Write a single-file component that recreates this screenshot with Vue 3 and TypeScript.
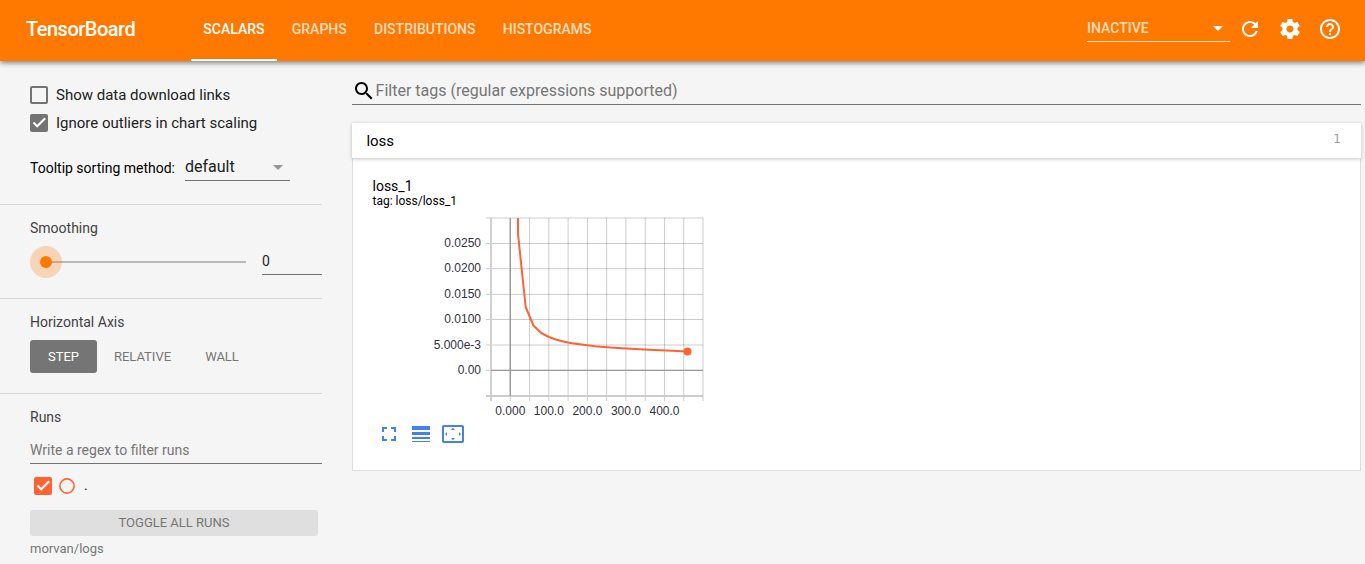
<script setup lang="ts">
import { ref } from 'vue'

const tabs: string[] = ['SCALARS', 'GRAPHS', 'DISTRIBUTIONS', 'HISTOGRAMS']
const activeTab = ref('SCALARS')
const axes: string[] = ['STEP', 'RELATIVE', 'WALL']
const axis = ref('STEP')

// Plot geometry, relative to the chart's own origin.
const left = 119
const right = 331
const top = 8
const bottom = 186
const columns: number[] = Array.from({ length: 10 }, (_, i) => 138.3 + i * 19.27)
const rows = [
  { y: 33.5, label: '0.0250' },
  { y: 58.7, label: '0.0200' },
  { y: 84.4, label: '0.0150' },
  { y: 109.5, label: '0.0100' },
  { y: 135, label: '5.000e-3' },
  { y: 160.4, label: '0.00' },
]
const ticks = [
  { x: 138.3, label: '0.000' },
  { x: 176.8, label: '100.0' },
  { x: 215.4, label: '200.0' },
  { x: 253.9, label: '300.0' },
  { x: 292.5, label: '400.0' },
]
const curve =
  'M146 8V24L153.7 97L161.4 115.5L169.2 123L176.9 127L184.6 129.8L192.3 131.7L200 133.2L207.7 134.3L215.4 135.3L223 136.2L238.5 137.6L254 138.6L277 139.7L300 140.7L315.5 141.4'
</script>

<template>
  <div class="page">
    <header class="toolbar">
      <div class="brand">TensorBoard</div>
      <nav class="tabs">
        <div v-for="t in tabs" :key="t" class="tab" :class="{ active: t === activeTab }" @click="activeTab = t">{{ t }}</div>
      </nav>
      <div class="status">
        <span>INACTIVE</span>
        <svg width="24" height="24" viewBox="0 0 24 24"><path fill="#fff" d="M7 10l5 5 5-5z" /></svg>
      </div>
      <div class="actions">
        <svg width="24" height="24" viewBox="0 0 24 24"><path fill="#fff" d="M17.65 6.35C16.2 4.9 14.21 4 12 4c-4.42 0-7.99 3.58-7.99 8s3.57 8 7.99 8c3.73 0 6.84-2.55 7.73-6h-2.08c-.82 2.33-3.04 4-5.65 4-3.31 0-6-2.69-6-6s2.69-6 6-6c1.66 0 3.14.69 4.22 1.78L13 11h7V4l-2.35 2.35z" /></svg>
        <svg width="24" height="24" viewBox="0 0 24 24"><path fill="#fff" d="M19.43 12.98c.04-.32.07-.64.07-.98s-.03-.66-.07-.98l2.11-1.65c.19-.15.24-.42.12-.64l-2-3.46c-.12-.22-.39-.3-.61-.22l-2.49 1c-.52-.4-1.08-.73-1.69-.98l-.38-2.65C14.46 2.18 14.25 2 14 2h-4c-.25 0-.46.18-.49.42l-.38 2.65c-.61.25-1.17.59-1.69.98l-2.49-1c-.23-.09-.49 0-.61.22l-2 3.46c-.13.22-.07.49.12.64l2.11 1.65c-.04.32-.07.65-.07.98s.03.66.07.98l-2.11 1.65c-.19.15-.24.42-.12.64l2 3.46c.12.22.39.3.61.22l2.49-1c.52.4 1.08.73 1.69.98l.38 2.65c.03.24.24.42.49.42h4c.25 0 .46-.18.49-.42l.38-2.65c.61-.25 1.17-.59 1.69-.98l2.49 1c.23.09.49 0 .61-.22l2-3.46c.12-.22.07-.49-.12-.64l-2.11-1.65zM12 15.5c-1.93 0-3.5-1.57-3.5-3.5s1.57-3.5 3.5-3.5 3.5 1.57 3.5 3.5-1.57 3.5-3.5 3.5z" /></svg>
        <svg width="24" height="24" viewBox="0 0 24 24"><path fill="#fff" d="M11 18h2v-2h-2v2zm1-16C6.48 2 2 6.48 2 12s4.48 10 10 10 10-4.48 10-10S17.52 2 12 2zm0 18c-4.41 0-8-3.59-8-8s3.59-8 8-8 8 3.59 8 8-3.59 8-8 8zm0-14c-2.21 0-4 1.79-4 4h2c0-1.1.9-2 2-2s2 .9 2 2c0 2-3 1.75-3 5h2c0-2.25 3-2.5 3-5 0-2.21-1.79-4-4-4z" /></svg>
      </div>
    </header>

    <div class="body">
      <aside class="sidebar">
        <section class="options">
          <div class="check-row"><span class="box"></span><span>Show data download links</span></div>
          <div class="check-row">
            <span class="box checked"><svg width="18" height="18" viewBox="0 0 18 18"><path d="M3.5 8.6L7.2 12.3L15.2 4.3" fill="none" stroke="#fff" stroke-width="2.1" /></svg></span>
            <span>Ignore outliers in chart scaling</span>
          </div>
          <div class="sort-row">
            <span class="sort-label">Tooltip sorting method:</span>
            <div class="dropdown">
              <span>default</span>
              <svg width="24" height="24" viewBox="0 0 24 24"><path fill="#969696" d="M7 10l5 5 5-5z" /></svg>
            </div>
          </div>
        </section>

        <section class="smoothing">
          <h3>Smoothing</h3>
          <div class="slider-row">
            <svg class="slider" width="216" height="32" viewBox="0 0 216 32">
              <rect x="16" y="15" width="200" height="2" fill="#b8b8b8" />
              <circle cx="16" cy="16" r="16" fill="#ff7800" fill-opacity=".26" />
              <circle cx="16" cy="16" r="6" fill="#ff7800" />
            </svg>
            <div class="number">0</div>
          </div>
        </section>

        <section class="axis">
          <h3>Horizontal Axis</h3>
          <div class="axis-buttons">
            <button v-for="a in axes" :key="a" :class="[a.toLowerCase(), { selected: a === axis }]" @click="axis = a">{{ a }}</button>
          </div>
        </section>

        <section class="runs">
          <h3>Runs</h3>
          <div class="regex">Write a regex to filter runs</div>
          <div class="run-row">
            <span class="box run-box"><svg width="18" height="18" viewBox="0 0 18 18"><path d="M3.5 8.6L7.2 12.3L15.2 4.3" fill="none" stroke="#fff" stroke-width="2.1" /></svg></span>
            <svg class="radio" width="16" height="16" viewBox="0 0 16 16"><circle cx="8" cy="8" r="7.1" fill="none" stroke="#ff6333" stroke-width="1.6" /></svg>
            <span class="run-name">.</span>
          </div>
          <button class="toggle">TOGGLE ALL RUNS</button>
          <div class="logdir">morvan/logs</div>
        </section>
      </aside>

      <main class="content">
        <div class="search">
          <svg width="24" height="24" viewBox="0 0 24 24"><path d="M15.5 14h-.79l-.28-.27C15.41 12.59 16 11.11 16 9.5 16 5.91 13.09 3 9.5 3S3 5.91 3 9.5 5.91 16 9.5 16c1.61 0 3.09-.59 4.23-1.57l.27.28v.79l5 4.99L20.49 19l-4.99-5zm-6 0C7.01 14 5 11.99 5 9.5S7.01 5 9.5 5 14 7.01 14 9.5 11.99 14 9.5 14z" /></svg>
          <span>Filter tags (regular expressions supported)</span>
        </div>
        <div class="group-head"><span>loss</span><span class="count">1</span></div>
        <div class="group-body">
          <div class="chart-title">loss_1</div>
          <div class="chart-tag">tag: loss/loss_1</div>
          <svg class="chart" width="340" height="212" viewBox="0 0 340 212">
            <g stroke="#000" stroke-opacity=".2" stroke-width="1">
              <path v-for="x in columns" :key="x" :d="`M${x} ${top}V${bottom + 5}`" />
              <path v-for="r in rows" :key="r.y" :d="`M${left - 5} ${r.y}H${right}`" />
              <path :d="`M${left - 5} ${top}H${right}V${bottom + 5}`" fill="none" stroke-opacity=".2" />
            </g>
            <path :d="`M${left} ${top}V${bottom + 5}M${left - 5} ${bottom}H${right}`" stroke="#ccc" stroke-width="1.8" />
            <path :d="`M138.3 ${top}V${bottom}M${left} 160.4H${right}`" stroke="#999" stroke-width="1.4" />
            <path :d="curve" fill="none" stroke="#ff6333" stroke-width="2" stroke-linejoin="round" />
            <circle cx="315.5" cy="141.5" r="4" fill="#ff6333" />
            <g class="labels" text-anchor="end">
              <text v-for="r in rows" :key="r.label" x="109" :y="r.y + 3.7">{{ r.label }}</text>
            </g>
            <g class="labels" text-anchor="middle">
              <text v-for="t in ticks" :key="t.label" :x="t.x" y="205">{{ t.label }}</text>
            </g>
          </svg>
          <div class="chart-tools">
            <svg width="14" height="14" viewBox="0 0 14 14"><path fill="#4480f4" d="M0 0h5v2H2v3H0zM9 0h5v5h-2V2H9zM0 9h2v3h3v2H0zM12 9h2v5H9v-2h3z" /></svg>
            <svg width="18" height="16" viewBox="0 0 18 16"><path fill="#4480f4" d="M0 0h18v4H0zM0 6h18v3H0zM0 11h18v2H0zM0 15h18v1H0z" /></svg>
            <svg width="22" height="18" viewBox="0 0 22 18">
              <rect x="1" y="1" width="20" height="16" rx=".8" fill="none" stroke="#4480f4" stroke-width="2" />
              <path fill="#4480f4" d="M11 2.8L13 5H9zM11 15.2L13 13H9zM3 9L5 7v4zM19 9L17 7v4z" />
            </svg>
          </div>
        </div>
      </main>
    </div>
  </div>
</template>

<style>
body {
  margin: 0;
  overflow: hidden;
}
</style>

<style scoped>
.page {
  width: 1365px;
  height: 564px;
  overflow: hidden;
  background: #f5f5f5;
  font-family: Roboto, sans-serif;
  color: #000;
}
.page * {
  box-sizing: border-box;
}
svg {
  display: block;
  flex: none;
}
.toolbar {
  position: relative;
  display: flex;
  height: 61px;
  padding-left: 26px;
  background: #ff7800;
  color: #fff;
  box-shadow: 0 2px 5px rgba(0, 0, 0, .48);
}
.brand {
  width: 165px;
  font-size: 20px;
  line-height: 58px;
  font-weight: 500;
  letter-spacing: -.5px;
}
.tabs {
  display: flex;
  gap: 2.7px;
  flex: 1;
}
.tab {
  height: 61px;
  padding: 0 12.3px;
  font-size: 14px;
  font-weight: 500;
  line-height: 58px;
  color: rgba(255, 255, 255, .76);
  border-bottom: 2px solid transparent;
}
.tab.active {
  color: #fff;
  border-color: #fff;
}
.status {
  display: flex;
  justify-content: space-between;
  width: 143px;
  height: 26px;
  margin-top: 16px;
  border-bottom: 1px solid #ffe0c0;
  font-size: 14px;
  font-weight: 500;
  line-height: 24px;
  color: rgba(255, 255, 255, .76);
}
.actions {
  display: flex;
  gap: 16px;
  padding: 17px 23px 0 8px;
}
.body {
  display: flex;
  height: 503px;
}
.sidebar {
  width: 322px;
  flex: none;
}
section {
  padding-left: 30px;
  border-bottom: 1px solid #d7d7d7;
}
h3 {
  margin: 0;
  font-size: 14px;
  font-weight: 400;
  line-height: 16px;
  color: #424242;
}
.options {
  height: 144px;
  padding-top: 20px;
}
.check-row {
  display: flex;
  align-items: center;
  gap: 8px;
  height: 28px;
  font-size: 15px;
  color: #212121;
}
.box {
  flex: none;
  width: 18px;
  height: 18px;
  border: 2px solid #737373;
  border-radius: 2px;
}
.box.checked {
  border: 0;
  background: #737373;
}
.sort-row {
  display: flex;
  gap: 10px;
  margin-top: 16px;
  font-size: 14px;
  line-height: 28px;
}
.sort-label {
  width: 145px;
  padding-top: 1px;
  white-space: nowrap;
}
.dropdown {
  display: flex;
  justify-content: space-between;
  width: 105px;
  height: 28px;
  border-bottom: 1px solid #737373;
  font-size: 16px;
  color: #212121;
}
.dropdown svg {
  margin-top: 2px;
}
.smoothing {
  height: 94px;
  padding-top: 15px;
}
.slider-row {
  display: flex;
  gap: 16px;
  height: 32px;
  margin-top: 10px;
}
.number {
  width: 60px;
  height: 29px;
  border-bottom: 1px solid #737373;
  font-size: 14px;
  line-height: 30px;
  color: #212121;
}
.axis {
  height: 95px;
  padding-top: 15px;
}
.axis-buttons {
  display: flex;
  margin-top: 10px;
}
button {
  border: 0;
  padding: 0;
  border-radius: 3px;
  background: none;
  font-family: inherit;
  font-size: 13px;
  color: #757575;
}
.axis-buttons button {
  height: 33px;
}
.axis-buttons .selected {
  background: #757575;
  color: #fff;
}
.axis-buttons .step {
  width: 67px;
}
.axis-buttons .relative {
  width: 91px;
}
.axis-buttons .wall {
  width: 68px;
}
.runs {
  border: 0;
  padding-top: 15px;
}
.regex {
  height: 24px;
  margin-top: 15px;
  border-bottom: 1px solid #737373;
  font-size: 14px;
  line-height: 20px;
  color: #757575;
}
.run-row {
  display: flex;
  align-items: center;
  height: 18px;
  margin: 13px 0 15px 4px;
}
.run-box {
  border: 0;
  background: #ff6333;
}
.radio {
  margin-left: 7px;
}
.run-name {
  margin: 0 0 3px 9px;
  font-size: 14px;
}
.toggle {
  display: block;
  width: 288px;
  height: 26px;
  padding-bottom: 2px;
  background: #dfdfdf;
}
.logdir {
  margin-top: 5px;
  font-size: 13px;
  line-height: 15px;
  color: #757575;
}
.content {
  width: 1009px;
  margin-left: 30px;
}
.search {
  display: flex;
  height: 26px;
  margin-top: 18px;
  border-bottom: 1px solid #737373;
  font-size: 16px;
  line-height: 23px;
  color: #757575;
}
.search span {
  margin-left: -.4px;
}
.group-head {
  position: relative;
  display: flex;
  justify-content: space-between;
  height: 35px;
  margin-top: 18px;
  padding: 0 20px 0 14.4px;
  background: #fff;
  box-shadow: 0 1px 4px rgba(0, 0, 0, .24);
  font-size: 15px;
  line-height: 36px;
}
.count {
  font-family: 'DejaVu Sans', sans-serif;
  font-size: 12px;
  line-height: 32px;
  color: #9e9e9e;
}
.group-body {
  height: 313px;
  padding: 20px 0 0 20px;
  border: 1px solid #dedede;
  border-top: 0;
  background: #fff;
}
.chart-title {
  margin-left: -.5px;
  font-size: 14px;
  line-height: 16px;
}
.chart-tag {
  margin-left: -.5px;
  font-size: 12px;
  line-height: 14px;
}
.chart {
  margin: 2px 0 0 -1px;
}
.labels {
  font-family: 'Liberation Sans', sans-serif;
  font-size: 12px;
  fill: #32313f;
}
.chart-tools {
  display: flex;
  align-items: center;
  margin: 3px 0 0 9px;
  gap: 16px;
}
.chart-tools svg:last-child {
  margin-left: -4px;
}
</style>
